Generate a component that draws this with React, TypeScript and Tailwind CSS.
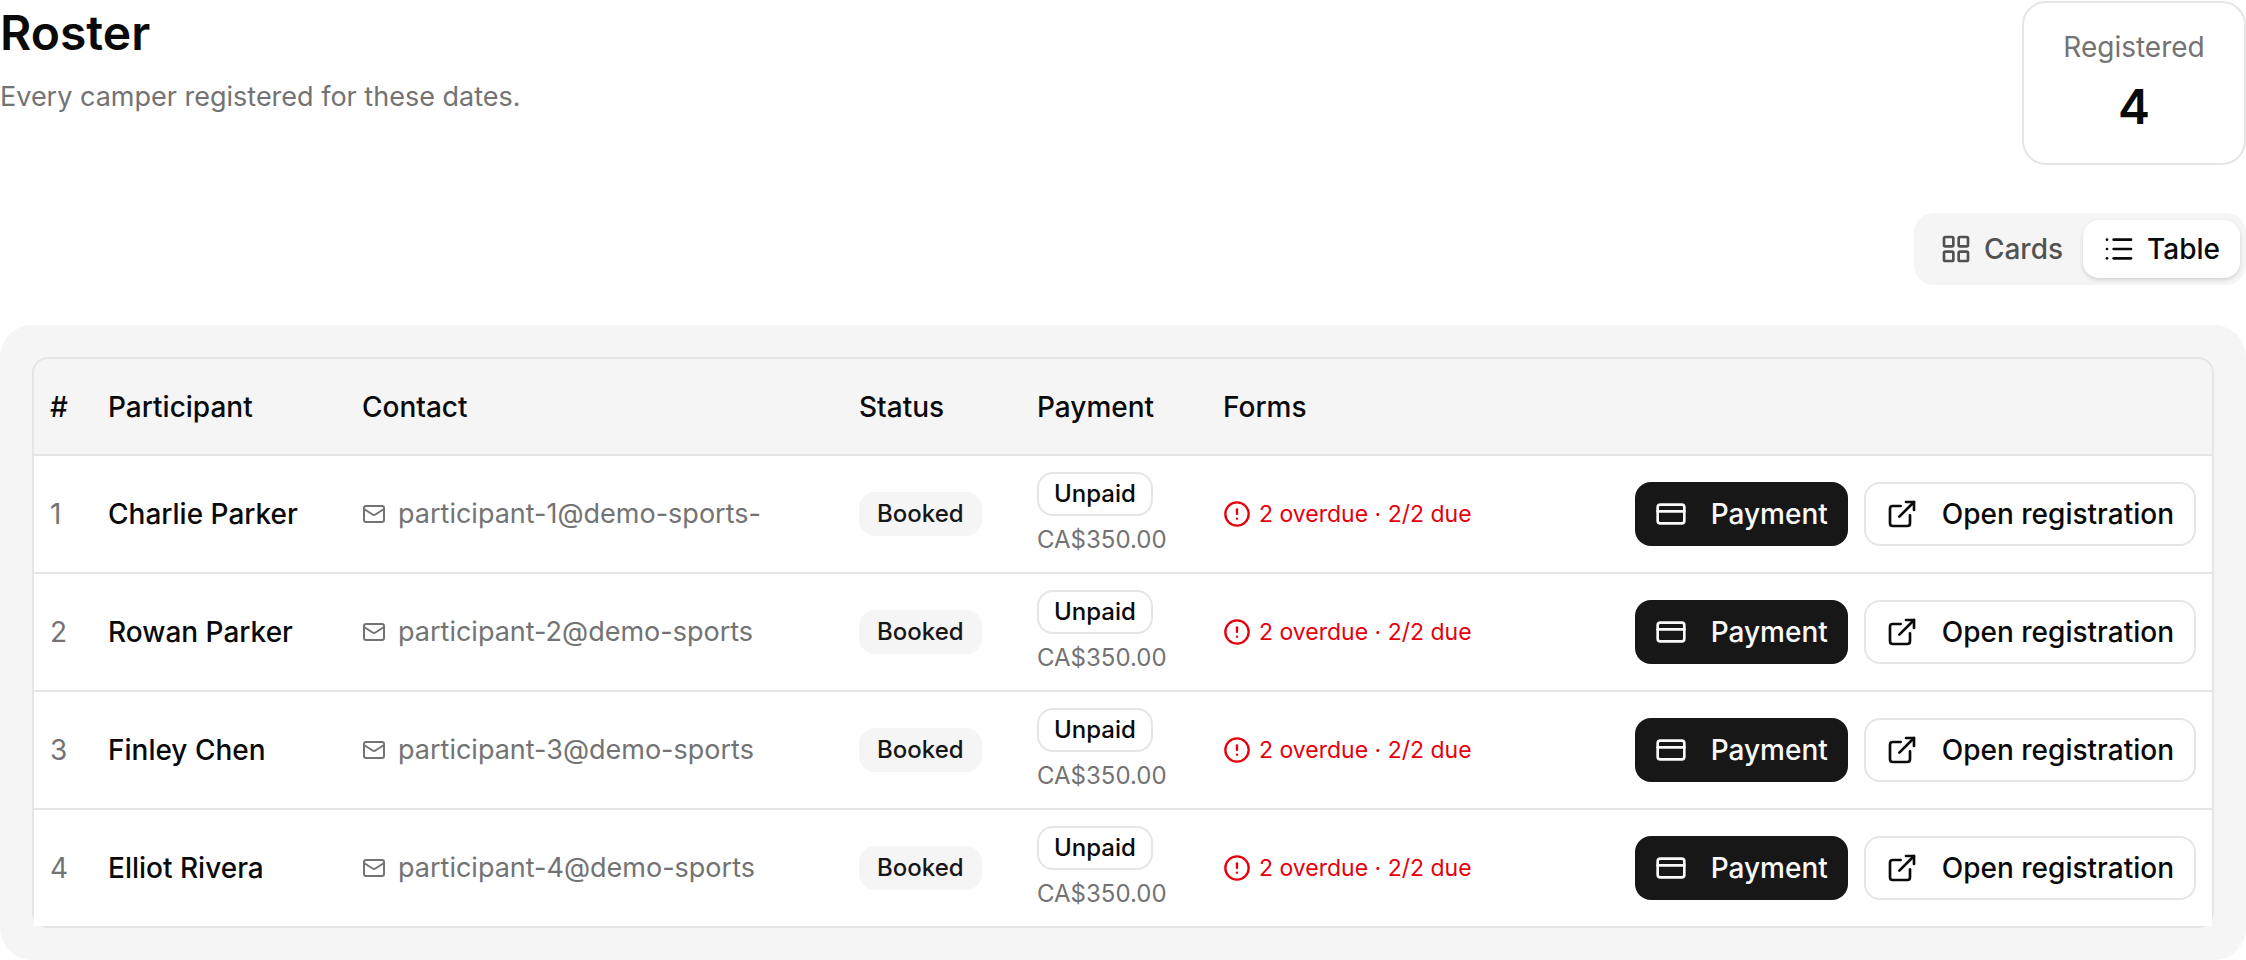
import { CircleAlert, CreditCard, ExternalLink, LayoutGrid, List, Mail } from "lucide-react";

type Participant = {
  id: number;
  name: string;
  email: string;
  status: string;
  payment: string;
  amount: string;
  forms: string;
};

const participants: Participant[] = [
  { id: 1, name: "Charlie Parker", email: "participant-1@demo-sports-" },
  { id: 2, name: "Rowan Parker", email: "participant-2@demo-sports" },
  { id: 3, name: "Finley Chen", email: "participant-3@demo-sports" },
  { id: 4, name: "Elliot Rivera", email: "participant-4@demo-sports" },
].map((p) => ({
  ...p,
  status: "Booked",
  payment: "Unpaid",
  amount: "CA$350.00",
  forms: "2 overdue · 2/2 due",
}));

function PageHeader() {
  return (
    <header className="flex items-start justify-between">
      <div className="flex flex-col gap-3">
        <h1 className="text-[48px] leading-[64px] font-semibold">Roster</h1>
        <p className="text-[27px] leading-[40px] text-[#737373]">
          Every camper registered for these dates.
        </p>
      </div>
      <div className="flex min-w-[224px] flex-col items-center gap-2 rounded-3xl border-2 border-[#e5e5e5] px-6 py-6">
        <span className="text-[28px] leading-[40px] text-[#737373]">Registered</span>
        <span className="text-[48px] leading-[64px] font-semibold">4</span>
      </div>
    </header>
  );
}

function ViewToggle() {
  return (
    <div className="mt-12 flex justify-end">
      <div className="flex h-[72px] items-stretch rounded-[20px] bg-[#f5f5f5] px-[6px] py-[7px]">
        <button
          type="button"
          className="flex items-center gap-3 rounded-2xl px-5 text-[28px] font-medium text-[#525252]"
        >
          <LayoutGrid size={32} />
          Cards
        </button>
        <button
          type="button"
          aria-pressed="true"
          className="flex items-center gap-3 rounded-2xl bg-white px-5 text-[28px] font-medium shadow-[0_2px_4px_rgba(0,0,0,0.14)]"
        >
          <List size={32} />
          Table
        </button>
      </div>
    </div>
  );
}

function ParticipantRow({ p }: { p: Participant }) {
  return (
    <tr className="bg-white">
      <td className="px-4 text-[#737373]">{p.id}</td>
      <td className="px-4 font-medium">{p.name}</td>
      <td className="px-4 text-[27px] text-[#737373]">
        <a href={"mailto:" + p.email} className="flex items-center gap-3">
          <Mail size={24} className="shrink-0" />
          {p.email}
        </a>
      </td>
      <td className="px-4">
        <span className="inline-flex h-11 items-center rounded-2xl bg-[#f5f5f5] px-[18px] align-middle text-[24px] font-medium text-[#171717]">
          {p.status}
        </span>
      </td>
      <td className="px-4 py-4">
        <div className="flex flex-col items-start gap-2">
          <span className="flex h-11 items-center rounded-2xl border-2 border-[#e5e5e5] px-[15px] text-[24px] font-medium">
            {p.payment}
          </span>
          <span className="text-[24px] leading-[32px] text-[#737373]">{p.amount}</span>
        </div>
      </td>
      <td className="px-4">
        <span className="flex items-center gap-2 text-[23px] text-[#e7000b]">
          <CircleAlert size={28} />
          {p.forms}
        </span>
      </td>
      <td className="px-4">
        <div className="flex justify-end gap-4">
          <button
            type="button"
            className="flex h-16 items-center gap-6 rounded-2xl bg-[#171717] px-5 font-medium text-[#fafafa]"
          >
            <CreditCard size={32} />
            Payment
          </button>
          <button
            type="button"
            className="flex h-16 items-center gap-6 rounded-2xl border-2 border-[#e5e5e5] bg-white px-5 font-medium"
          >
            <ExternalLink size={32} />
            Open registration
          </button>
        </div>
      </td>
    </tr>
  );
}

export default function App() {
  return (
    <main className="bg-white pt-px font-['Inter',sans-serif] text-[#0a0a0a]">
      <PageHeader />
      <ViewToggle />
      <section className="mt-10 rounded-[32px] bg-[#f5f5f5] p-8">
        <div className="rounded-2xl border-2 border-[#e5e5e5]">
          <table className="w-full table-fixed border-separate border-spacing-0 text-left text-[28px] leading-[40px] whitespace-nowrap [&_td]:border-b-2 [&_td]:border-[#e5e5e5] [&_th]:border-b-2 [&_th]:border-[#e5e5e5] [&_tr:last-child_td]:border-b-0">
            <colgroup>
              <col className="w-[58px]" />
              <col className="w-[254px]" />
              <col className="w-[497px]" />
              <col className="w-[178px]" />
              <col className="w-[186px]" />
              <col className="w-[320px]" />
              <col />
            </colgroup>
            <thead>
              <tr className="h-[97px]">
                <th className="px-4 font-medium">#</th>
                <th className="px-4 font-medium">Participant</th>
                <th className="px-4 font-medium">Contact</th>
                <th className="px-4 font-medium">Status</th>
                <th className="px-4 font-medium">Payment</th>
                <th className="px-4 font-medium">Forms</th>
                <th className="px-4" aria-label="Actions" />
              </tr>
            </thead>
            <tbody>
              {participants.map((p) => (
                <ParticipantRow key={p.id} p={p} />
              ))}
            </tbody>
          </table>
        </div>
      </section>
    </main>
  );
}
